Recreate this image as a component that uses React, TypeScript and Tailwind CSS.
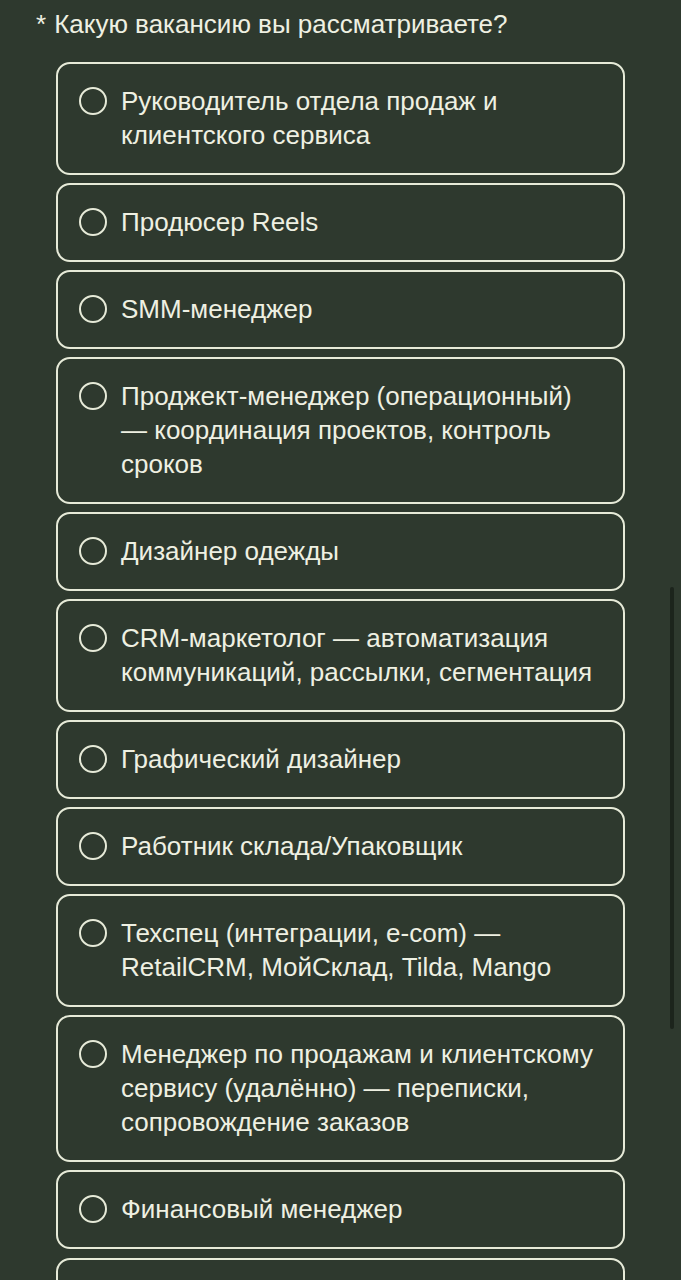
const options = [
  "Руководитель отдела продаж и клиентского сервиса",
  "Продюсер Reels",
  "SMM-менеджер",
  "Проджект-менеджер (операционный) — координация проектов, контроль сроков",
  "Дизайнер одежды",
  "CRM-маркетолог — автоматизация коммуникаций, рассылки, сегментация",
  "Графический дизайнер",
  "Работник склада/Упаковщик",
  "Техспец (интеграции, e-com) — RetailCRM, МойСклад, Tilda, Mango",
  "Менеджер по продажам и клиентскому сервису (удалённо) — переписки, сопровождение заказов",
  "Финансовый менеджер",
]

export default function App() {
  return (
    <div
      className="relative min-h-screen h-[1280px] overflow-hidden bg-[#2e392e] text-[#eef0e2]"
      style={{ fontFamily: '"Liberation Sans", Arial, sans-serif' }}
    >
      <div className="pl-[36px] pt-[7px] text-[26px] leading-[34px]">
        <span className="mr-[8px]">*</span>Какую вакансию вы рассматриваете?
      </div>

      <div className="mt-[21px] ml-[56px] w-[569px] flex flex-col gap-[8px]">
        {options.map((label, i) => (
          <label
            key={i}
            className="flex items-start gap-[14px] rounded-[14px] border-2 border-[#e6ead8] pl-[21px] pr-[24px] pt-[20px] pb-[21px] text-[26px] leading-[34px]"
          >
            <span className="mt-[3px] h-[28px] w-[28px] shrink-0 rounded-full border-2 border-[#e6ead8]" />
            <span>{label}</span>
          </label>
        ))}
        {/* next option, cut off by the bottom of the screen */}
        <div className="mt-[1px] h-[80px] rounded-[14px] border-2 border-[#e6ead8]" />
      </div>

      {/* scrollbar */}
      <div className="absolute left-[670px] top-[587px] h-[442px] w-[4px] rounded-full bg-[#1c241c]" />
    </div>
  )
}
